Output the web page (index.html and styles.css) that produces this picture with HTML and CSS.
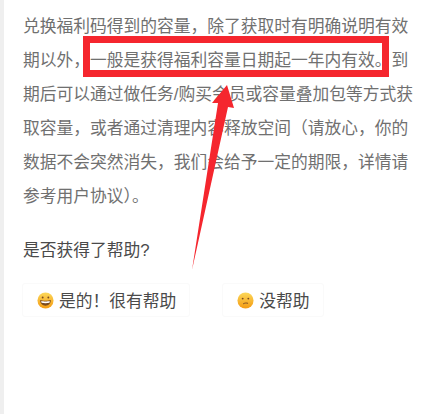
FILE: index.html
```html
<!DOCTYPE html>
<html lang="zh-CN">
<head>
    <meta charset="UTF-8">
    <title>福利码容量有效期</title>
    <link rel="stylesheet" href="styles.css">
</head>
<body>
    <div class="page">
        <p class="answer">兑换福利码得到的容量，除了获取时有明确说明有效期以外，一般是获得福利容量日期起一年内有效。到期后可以通过做任务/购买会员或容量叠加包等方式获取容量，或者通过清理内容释放空间（请放心，你的数据不会突然消失，我们会给予一定的期限，详情请参考用户协议）。</p>

        <h4 class="question">是否获得了帮助?</h4>
        <div class="feedback">
            <div class="feedback-btn">
                <svg class="emoji" viewBox="0 0 18 18">
                    <defs>
                        <linearGradient id="face" x1="0" y1="0" x2="0" y2="1">
                            <stop offset="0" stop-color="#fcd85a"/>
                            <stop offset="1" stop-color="#f49b12"/>
                        </linearGradient>
                    </defs>
                    <circle cx="9" cy="9" r="8.5" fill="url(#face)"/>
                    <path d="M3.4 8.6c1.6 1 9.600 1 11.200 0 .3 3.600-2.400 6-5.600 6s-5.900-2.400-5.600-6z" fill="#7a4a20"/>
                    <path d="M4.400 9.500c2 .6 7.200 .6 9.200 0l-.4 2c-2.400 .5-6 .5-8.400 0z" fill="#fff"/>
                    <circle cx="6" cy="5.800" r="1" fill="#7a4a20"/>
                    <circle cx="12" cy="5.800" r="1" fill="#7a4a20"/>
                </svg>
                <span>是的！很有帮助</span>
            </div>
            <div class="feedback-btn">
                <svg class="emoji" viewBox="0 0 18 18">
                    <circle cx="9" cy="9" r="8.5" fill="url(#face)"/>
                    <circle cx="6" cy="7" r="1" fill="#7a4a20"/>
                    <circle cx="12" cy="7" r="1" fill="#7a4a20"/>
                    <path d="M6.500 12.600c1.500-1 3.500-1.200 5.200-.6" fill="none" stroke="#7a4a20" stroke-width="1"/>
                </svg>
                <span>没帮助</span>
            </div>
        </div>

        <!-- 标注：红框和箭头 -->
        <div class="mark-box"></div>
        <svg class="mark-arrow" viewBox="0 0 428 414">
            <path d="M227 85 234 108 228 107 192 270 218 103 212 103z" fill="#f5262e"/>
        </svg>
    </div>
</body>
</html>
```

FILE: styles.css
```css
* {
    box-sizing: border-box;
}

body {
    margin: 0;
    background: #fff;
    font-family: "Liberation Sans", "Noto Sans CJK SC", sans-serif;
}

.page {
    position: relative;
    height: 414px;
    padding: 10px 0 0 19px;
    border-left: 4px solid #efefef;
    overflow: hidden;
}

.answer {
    width: 395px;
    margin: 0;
    font-size: 16.75px;
    line-height: 34px;
    color: #707070;
}

.question {
    margin: 25px 0 0;
    font-size: 16.75px;
    line-height: 24px;
    font-weight: 400;
    color: #4a4a4a;
}

.feedback {
    display: flex;
    gap: 32px;
    margin: 20px 0 0 -1px;
}

.feedback-btn {
    display: flex;
    align-items: center;
    gap: 5px;
    height: 34px;
    padding: 0 13px 0 14px;
    border: 1px solid #fafafa;
    border-radius: 3px;
    font-size: 16.75px;
    color: #4a4a4a;
}

.emoji {
    width: 17px;
    height: 17px;
    flex: none;
}

.mark-box {
    position: absolute;
    left: 79px;
    top: 36px;
    width: 306px;
    height: 41px;
    border: 7px solid #f5262e;
}

.mark-arrow {
    position: absolute;
    left: -4px;
    top: 0;
    width: 428px;
    height: 414px;
}
```
